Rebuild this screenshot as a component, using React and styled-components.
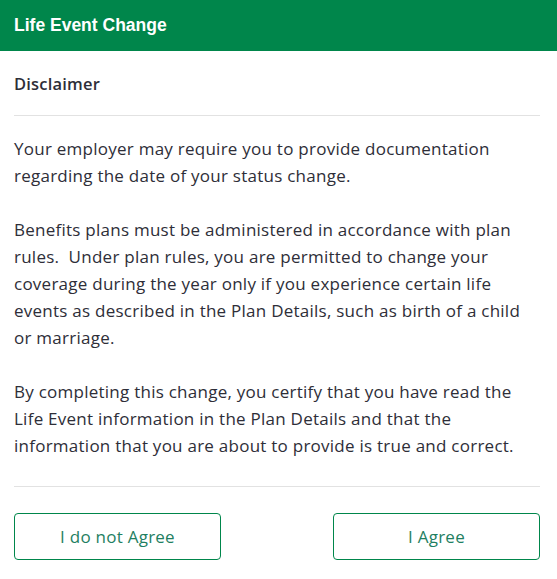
import React from "react";
import styled, { createGlobalStyle } from "styled-components";

const Global = createGlobalStyle`
  html, body { margin: 0; padding: 0; background: #fff; }
  * { box-sizing: border-box; }
`;

const Page = styled.div`
  width: 557px;
  font-family: "Open Sans", Lato, sans-serif;
  color: #2e2e38;
`;

const Header = styled.header`
  height: 51px;
  background: #00864b;
  color: #fff;
  display: flex;
  align-items: center;
  padding: 0 14px;
  font-family: "Liberation Sans", Arial, sans-serif;
  font-weight: 700;
  font-size: 17.5px;
`;

const Body = styled.div`
  padding: 0 17px 0 14px;
`;

const Title = styled.h2`
  margin: 0;
  height: 65px;
  display: flex;
  align-items: center;
  font-size: 16.5px;
  font-weight: 600;
  letter-spacing: 0.2px;
  border-bottom: 1px solid #e2e2e2;
  padding-top: 1px;
`;

const Content = styled.div`
  padding: 19px 0 27px;
  border-bottom: 1px solid #e2e2e2;
`;

const Para = styled.p`
  margin: 0 0 27px;
  font-size: 17px;
  line-height: 27px;
  letter-spacing: 0.25px;
  &:last-child { margin-bottom: 0; }
`;

const Footer = styled.div`
  display: flex;
  justify-content: space-between;
  padding: 26px 0 19px;
`;

const Button = styled.button`
  width: 207px;
  height: 47px;
  background: #fff;
  border: 1px solid #00864b;
  border-radius: 4px;
  color: #1f7f62;
  font-family: "Open Sans", Lato, sans-serif;
  font-size: 17px;
  letter-spacing: 0.25px;
  cursor: pointer;
`;

export default function App() {
  return (
    <Page>
      <Global />
      <Header>Life Event Change</Header>
      <Body>
        <Title>Disclaimer</Title>
        <Content>
          <Para>
            Your employer may require you to provide documentation regarding the date of your status change.
          </Para>
          <Para>
            Benefits plans must be administered in accordance with plan rules.&nbsp; Under plan rules, you are permitted to change your coverage during the year only if you experience certain life events as described in the Plan Details, such as birth of a child or marriage.
          </Para>
          <Para>
            By completing this change, you certify that you have read the Life Event information in the Plan Details and that the information that you are about to provide is true and correct.
          </Para>
        </Content>
        <Footer>
          <Button>I do not Agree</Button>
          <Button>I Agree</Button>
        </Footer>
      </Body>
    </Page>
  );
}
